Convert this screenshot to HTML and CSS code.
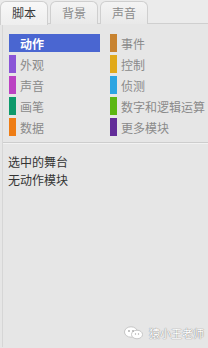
FILE: index.html
```html
<!DOCTYPE html>
<html lang="zh">
<head>
<meta charset="utf-8">
<link rel="stylesheet" href="styles.css">
</head>
<body>
<div class="app">
  <div class="tabs">
    <div class="tab active">脚本</div>
    <div class="tab">背景</div>
    <div class="tab">声音</div>
  </div>
  <div class="panel">
    <div class="cats">
      <div class="cat active"><span class="bar"></span>动作</div>
      <div class="cat"><span class="bar c-event"></span>事件</div>
      <div class="cat"><span class="bar c-looks"></span>外观</div>
      <div class="cat"><span class="bar c-control"></span>控制</div>
      <div class="cat"><span class="bar c-sound"></span>声音</div>
      <div class="cat"><span class="bar c-sense"></span>侦测</div>
      <div class="cat"><span class="bar c-pen"></span>画笔</div>
      <div class="cat"><span class="bar c-op"></span>数字和逻辑运算</div>
      <div class="cat"><span class="bar c-data"></span>数据</div>
      <div class="cat"><span class="bar c-more"></span>更多模块</div>
    </div>
    <div class="sep"></div>
    <div class="note">
      <div>选中的舞台</div>
      <div>无动作模块</div>
    </div>
  </div>
  <div class="watermark">
    <svg class="wm-icon" width="20" height="14" viewBox="0 0 20 14">
      <ellipse cx="7" cy="6" rx="6.5" ry="5.2" fill="#fff" stroke="#bbb" stroke-width="0.8"/>
      <ellipse cx="13" cy="8.5" rx="5.5" ry="4.3" fill="#fff" stroke="#bbb" stroke-width="0.8"/>
      <circle cx="5" cy="5" r="0.9" fill="#aaa"/>
      <circle cx="9" cy="5" r="0.9" fill="#aaa"/>
      <circle cx="11.5" cy="8" r="0.7" fill="#aaa"/>
      <circle cx="14.5" cy="8" r="0.7" fill="#aaa"/>
    </svg>
    <span class="wm-text">猿小王老师</span>
  </div>
</div>
</body>
</html>
```
FILE: styles.css
```css
html, body {
  margin: 0;
  padding: 0;
}
body {
  width: 208px;
  height: 348px;
  background: #e6e6e6;
  font-family: "Noto Sans CJK SC", "Noto Sans", sans-serif;
  font-size: 12px;
  overflow: hidden;
}
.app {
  position: relative;
  width: 208px;
  height: 348px;
}
.tabs {
  display: flex;
  gap: 2px;
  height: 24px;
  box-sizing: border-box;
  padding-top: 1px;
  border-bottom: 1px solid #cfcfcf;
  background: #ebebeb;
}
.tab {
  width: 48px;
  height: 23px;
  box-sizing: border-box;
  border: 1px solid #cfcfcf;
  border-bottom: none;
  border-radius: 6px 6px 0 0;
  background: linear-gradient(#f4f4f4, #e9e9e9);
  color: #8a8a8a;
  font-size: 12px;
  line-height: 21px;
  text-align: center;
}
.tab.active {
  height: 24px;
  margin-bottom: -1px;
  background: linear-gradient(#f8f8f8, #eeeeee);
  color: #3a3a3a;
}
.panel {
  margin-left: 2px;
  border-left: 1px solid #d6d6d6;
  height: 323px;
  background: #e6e6e6;
}
.cats {
  display: grid;
  grid-template-columns: 91px 98px;
  column-gap: 10px;
  row-gap: 3px;
  padding: 10px 0 0 6px;
}
.cat {
  display: flex;
  align-items: center;
  height: 18px;
  color: #8a8a8a;
  font-size: 12px;
  white-space: nowrap;
}
.bar {
  width: 7px;
  height: 18px;
  margin-right: 4px;
  flex: none;
}
.cat.active {
  background: #4a66d1;
  color: #ffffff;
  font-weight: bold;
}
.c-event { background: #c88330; }
.c-looks { background: #8a55d7; }
.c-control { background: #e1a91a; }
.c-sound { background: #bb42c3; }
.c-sense { background: #2ca5e2; }
.c-pen { background: #0e9a6c; }
.c-op { background: #5cb712; }
.c-data { background: #ee7d16; }
.c-more { background: #632d99; }
.sep {
  margin: 6px 0 0 0;
  height: 1px;
  background: #cdcdcd;
  border-bottom: 1px solid #f2f2f2;
}
.note {
  padding: 9px 0 0 5px;
  color: #333333;
  font-size: 12px;
  line-height: 18px;
}
.watermark {
  position: absolute;
  right: 4px;
  bottom: 7px;
  display: flex;
  align-items: center;
  gap: 5px;
}
.wm-text {
  color: #ffffff;
  font-size: 11px;
  text-shadow: 0 0 1px #888, 0 0 1px #888;
}
```
